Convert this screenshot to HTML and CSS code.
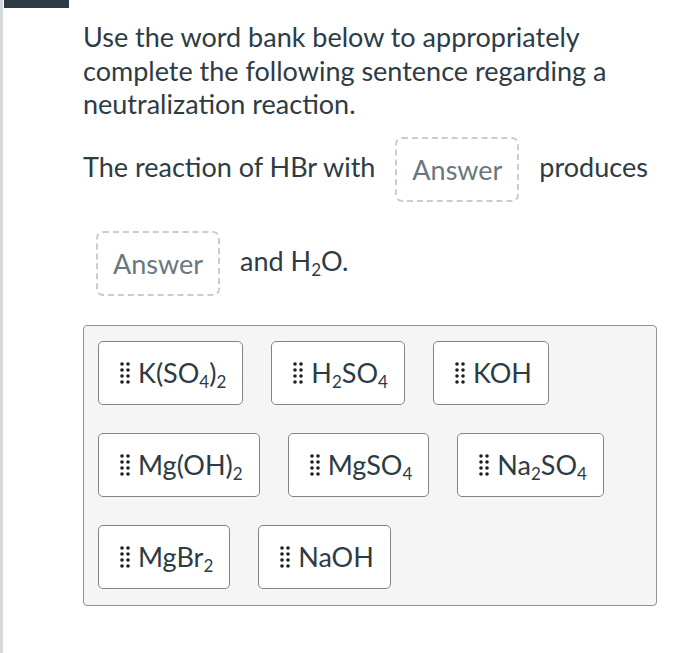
FILE: index.html
```html
<!DOCTYPE html>
<html lang="en">
<head>
    <meta charset="UTF-8">
    <link rel="stylesheet" href="styles.css">
    <title>Word bank</title>
</head>
<body>
    <div class="tab"></div>

    <div class="question">
        <p class="prompt">Use the word bank below to appropriately complete the following sentence regarding a neutralization reaction.</p>

        <p class="sentence">The reaction of HBr with <span class="blank">Answer</span> produces <span class="blank">Answer</span> and H<sub>2</sub>O.</p>

        <div class="bank">
            <div class="chip"><svg class="grip" viewBox="0 0 10 22"><circle cx="2" cy="2" r="1.8"/><circle cx="8" cy="2" r="1.8"/><circle cx="2" cy="8" r="1.8"/><circle cx="8" cy="8" r="1.8"/><circle cx="2" cy="14" r="1.8"/><circle cx="8" cy="14" r="1.8"/><circle cx="2" cy="20" r="1.8"/><circle cx="8" cy="20" r="1.8"/></svg><span>K(SO<sub>4</sub>)<sub>2</sub></span></div>
            <div class="chip"><svg class="grip" viewBox="0 0 10 22"><circle cx="2" cy="2" r="1.8"/><circle cx="8" cy="2" r="1.8"/><circle cx="2" cy="8" r="1.8"/><circle cx="8" cy="8" r="1.8"/><circle cx="2" cy="14" r="1.8"/><circle cx="8" cy="14" r="1.8"/><circle cx="2" cy="20" r="1.8"/><circle cx="8" cy="20" r="1.8"/></svg><span>H<sub>2</sub>SO<sub>4</sub></span></div>
            <div class="chip"><svg class="grip" viewBox="0 0 10 22"><circle cx="2" cy="2" r="1.8"/><circle cx="8" cy="2" r="1.8"/><circle cx="2" cy="8" r="1.8"/><circle cx="8" cy="8" r="1.8"/><circle cx="2" cy="14" r="1.8"/><circle cx="8" cy="14" r="1.8"/><circle cx="2" cy="20" r="1.8"/><circle cx="8" cy="20" r="1.8"/></svg><span>KOH</span></div>
            <div class="chip"><svg class="grip" viewBox="0 0 10 22"><circle cx="2" cy="2" r="1.8"/><circle cx="8" cy="2" r="1.8"/><circle cx="2" cy="8" r="1.8"/><circle cx="8" cy="8" r="1.8"/><circle cx="2" cy="14" r="1.8"/><circle cx="8" cy="14" r="1.8"/><circle cx="2" cy="20" r="1.8"/><circle cx="8" cy="20" r="1.8"/></svg><span>Mg(OH)<sub>2</sub></span></div>
            <div class="chip"><svg class="grip" viewBox="0 0 10 22"><circle cx="2" cy="2" r="1.8"/><circle cx="8" cy="2" r="1.8"/><circle cx="2" cy="8" r="1.8"/><circle cx="8" cy="8" r="1.8"/><circle cx="2" cy="14" r="1.8"/><circle cx="8" cy="14" r="1.8"/><circle cx="2" cy="20" r="1.8"/><circle cx="8" cy="20" r="1.8"/></svg><span>MgSO<sub>4</sub></span></div>
            <div class="chip"><svg class="grip" viewBox="0 0 10 22"><circle cx="2" cy="2" r="1.8"/><circle cx="8" cy="2" r="1.8"/><circle cx="2" cy="8" r="1.8"/><circle cx="8" cy="8" r="1.8"/><circle cx="2" cy="14" r="1.8"/><circle cx="8" cy="14" r="1.8"/><circle cx="2" cy="20" r="1.8"/><circle cx="8" cy="20" r="1.8"/></svg><span>Na<sub>2</sub>SO<sub>4</sub></span></div>
            <div class="chip"><svg class="grip" viewBox="0 0 10 22"><circle cx="2" cy="2" r="1.8"/><circle cx="8" cy="2" r="1.8"/><circle cx="2" cy="8" r="1.8"/><circle cx="8" cy="8" r="1.8"/><circle cx="2" cy="14" r="1.8"/><circle cx="8" cy="14" r="1.8"/><circle cx="2" cy="20" r="1.8"/><circle cx="8" cy="20" r="1.8"/></svg><span>MgBr<sub>2</sub></span></div>
            <div class="chip"><svg class="grip" viewBox="0 0 10 22"><circle cx="2" cy="2" r="1.8"/><circle cx="8" cy="2" r="1.8"/><circle cx="2" cy="8" r="1.8"/><circle cx="8" cy="8" r="1.8"/><circle cx="2" cy="14" r="1.8"/><circle cx="8" cy="14" r="1.8"/><circle cx="2" cy="20" r="1.8"/><circle cx="8" cy="20" r="1.8"/></svg><span>NaOH</span></div>
        </div>
    </div>
</body>
</html>
```

FILE: styles.css
```css
body{
    margin: 0;
    padding: 0;
    min-height: 653px;
    border-left: 3px solid #d6d9de;
    background: #fff;
    font-family: Lato, "Open Sans", sans-serif;
    color: #2d3b45;
}
.tab{
    width: 65px;
    height: 8px;
    margin-left: 1px;
    background: #2d3b45;
}
.question{
    width: 574px;
    padding-left: 80px;
}
.prompt{
    margin: 12px 0 0;
    font-size: 27px;
    line-height: 33.5px;
}
.sentence{
    margin: 2px 0 0;
    font-size: 27px;
    line-height: 33.5px;
}
sub{
    font-size: 17px;
    vertical-align: -5px;
    line-height: 0;
}
.blank{
    display: inline-block;
    vertical-align: middle;
    margin: 14px 13px 15px;
    padding: 0 15px;
    height: 61px;
    line-height: 61px;
    border: 2px dashed #c9ccd0;
    border-radius: 7px;
    color: #6b7780;
}
.bank{
    display: flex;
    flex-wrap: wrap;
    gap: 28px 28px;
    margin-top: 14px;
    padding: 15px 14px 16px;
    border: 1.5px solid #8c9399;
    border-radius: 4px;
    background: #f5f5f6;
}
.chip{
    display: flex;
    align-items: center;
    box-sizing: border-box;
    height: 64px;
    padding: 0 16px 0 21px;
    border: 1.5px solid #7d858c;
    border-radius: 5px;
    background: #fff;
    font-size: 27px;
}
.grip{
    width: 10px;
    height: 22px;
    margin-right: 8px;
    fill: #1b1f22;
}
```
